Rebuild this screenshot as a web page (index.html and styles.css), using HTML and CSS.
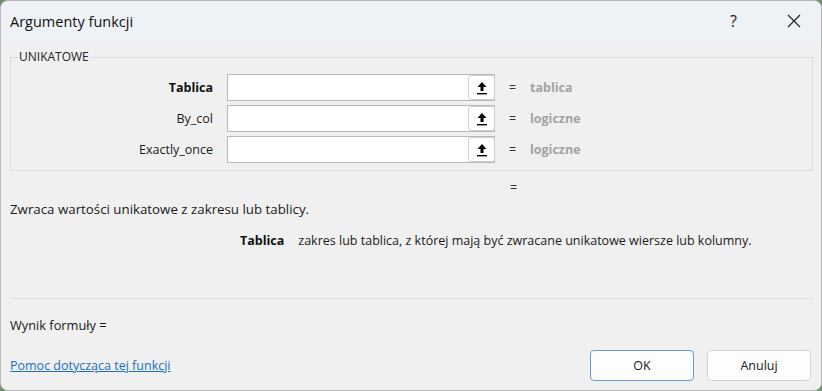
FILE: index.html
```html
<!DOCTYPE html>
<html lang="pl">
<head>
<meta charset="utf-8">
<title>Argumenty funkcji</title>
<link rel="stylesheet" href="styles.css">
</head>
<body>
<div class="window">
  <div class="titlebar">
    <span class="title">Argumenty funkcji</span>
    <span class="help">?</span>
    <svg class="close" width="14" height="14" viewBox="0 0 14 14"><path d="M1 1 L13 13 M13 1 L1 13" stroke="#222" stroke-width="1.2" fill="none"/></svg>
  </div>
  <div class="body">
    <fieldset class="group">
      <legend>UNIKATOWE</legend>
      <div class="args">
        <div class="arg-label bold">Tablica</div>
        <div class="input"><span class="ref-btn"><svg width="12" height="14" viewBox="0 0 12 14"><path d="M6 1 L1.5 6 L4.5 6 L4.5 10 L7.5 10 L7.5 6 L10.5 6 Z" fill="#000"/><rect x="1" y="12" width="10" height="1.4" fill="#000"/></svg></span></div>
        <div class="eq">=</div>
        <div class="val">tablica</div>

        <div class="arg-label">By_col</div>
        <div class="input"><span class="ref-btn"><svg width="12" height="14" viewBox="0 0 12 14"><path d="M6 1 L1.5 6 L4.5 6 L4.5 10 L7.5 10 L7.5 6 L10.5 6 Z" fill="#000"/><rect x="1" y="12" width="10" height="1.4" fill="#000"/></svg></span></div>
        <div class="eq">=</div>
        <div class="val">logiczne</div>

        <div class="arg-label">Exactly_once</div>
        <div class="input"><span class="ref-btn"><svg width="12" height="14" viewBox="0 0 12 14"><path d="M6 1 L1.5 6 L4.5 6 L4.5 10 L7.5 10 L7.5 6 L10.5 6 Z" fill="#000"/><rect x="1" y="12" width="10" height="1.4" fill="#000"/></svg></span></div>
        <div class="eq">=</div>
        <div class="val">logiczne</div>
      </div>
    </fieldset>
    <div class="result-eq">=</div>
    <div class="desc">Zwraca wartości unikatowe z zakresu lub tablicy.</div>
    <div class="arg-desc"><span class="bold">Tablica</span><span class="arg-text">zakres lub tablica, z której mają być zwracane unikatowe wiersze lub kolumny.</span></div>
    <div class="sep"></div>
    <div class="formula">Wynik formuły =</div>
    <div class="footer">
      <a class="link" href="#">Pomoc dotycząca tej funkcji</a>
      <div class="buttons">
        <button class="btn primary">OK</button>
        <button class="btn">Anuluj</button>
      </div>
    </div>
  </div>
</div>
</body>
</html>
```
FILE: styles.css
```css
* { box-sizing: border-box; }
html, body { margin: 0; padding: 0; background: #6f8f6f; }
body { font-family: "Open Sans", "Noto Sans", sans-serif; font-size: 12.5px; color: #1a1a1a; }
.window {
  width: 822px; height: 391px;
  background: #f0f0f0;
  border: 1px solid #b9b9b9;
  border-radius: 8px;
  overflow: hidden;
  display: flex; flex-direction: column;
}
.titlebar {
  height: 40px; flex: none;
  background: #eef2f6;
  display: flex; align-items: center;
  padding: 0 0 0 9px;
}
.title { font-size: 14.5px; color: #111; flex: 1; }
.help { font-size: 16px; color: #222; margin-right: 50px; }
.close { margin-right: 20px; }
.body { padding: 0 8px 0 9px; flex: 1; display: flex; flex-direction: column; }
.group {
  margin: 9px 0 0 0; padding: 11px 0 6px 0;
  border: 1px solid #dadada;
  border-radius: 0;
  height: 121px;
}
.group legend { font-size: 12px; color: #222; padding: 0 1px; margin-left: 7px; line-height: 14px; }
.args {
  display: grid;
  grid-template-columns: 216px 268px 35px auto;
  row-gap: 4px;
  align-items: center;
  margin-top: -1px;
}
.arg-label { text-align: right; margin-right: 14px; }
.bold { font-weight: 700; color: #111; }
.input {
  height: 27px; background: #fff;
  border: 1px solid #b8b8b8;
  display: flex; justify-content: flex-end; align-items: stretch;
}
.ref-btn {
  width: 27px; margin: 0 -1px 0 0;
  border: 1px solid #cfcfcf; border-radius: 3px;
  background: #fff;
  display: flex; align-items: center; justify-content: center;
}
.eq { text-align: center; color: #333; }
.val { font-weight: 700; color: #a3a3a3; }
.result-eq { margin: 8px 0 0 500px; height: 16px; color: #333; }
.desc { margin-top: 5px; font-size: 13.3px; }
.arg-desc { margin: 14px 0 0 230px; }
.arg-text { margin-left: 14px; }
.sep { height: 1px; background: #dedede; margin-top: 49px; }
.formula { margin-top: 17px; font-size: 12.8px; }
.footer { display: flex; align-items: center; justify-content: space-between; margin-top: 16px; }
.link { color: #1a6fc4; text-decoration: underline; }
.buttons { display: flex; gap: 13px; margin-right: 2px; }
.btn {
  width: 104px; height: 31px;
  font-family: inherit; font-size: 12.5px; color: #1a1a1a;
  background: #fdfdfd;
  border: 1px solid #d3d3d3; border-radius: 4px;
}
.btn.primary { border-color: #6b9bd0; }
```
